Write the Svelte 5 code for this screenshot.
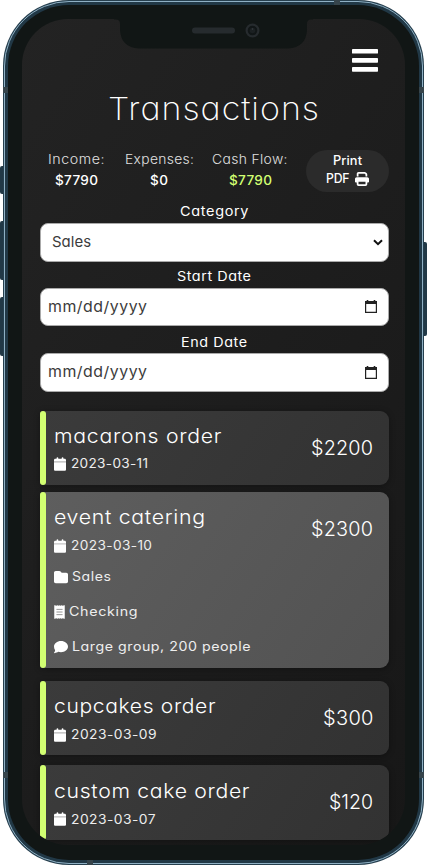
<script>
  const summary = [
    { label: 'Income:', value: '$7790', lw: 56.5, vw: 43, cell: 72 },
    { label: 'Expenses:', value: '$0', lw: 69, vw: 18, cell: 94.5 },
    { label: 'Cash Flow:', value: '$7790', lw: 75.5, vw: 43, cell: 87, positive: true }
  ];

  const transactions = [
    { title: 'macarons order', tw: 167.5, amount: '$2200', aw: 62, date: '2023-03-11', dw: 77 },
    {
      title: 'event catering', tw: 151, amount: '$2300', aw: 62, date: '2023-03-10', dw: 81,
      details: [
        { icon: 'folder', text: 'Sales', w: 39 },
        { icon: 'receipt', text: 'Checking', w: 68.5 },
        { icon: 'comment', text: 'Large group, 200 people', w: 178.5 }
      ]
    },
    { title: 'cupcakes order', tw: 161.5, amount: '$300', aw: 50.5, date: '2023-03-09', dw: 85.5 },
    { title: 'custom cake order', tw: 195.5, amount: '$120', aw: 44, date: '2023-03-07', dw: 84.5 }
  ];

  // Sets the text to the given width, shared between wider letters and tracking.
  function fit(node, width) {
    const natural = node.getBoundingClientRect().width;
    const k = Math.pow(width / natural, 0.6);
    const gap = (width / k - natural) / (node.textContent.length - 1);
    node.style.letterSpacing = `${gap}px`;
    node.style.transform = `scaleX(${k})`;
    node.style.marginRight = `${width - width / k - gap}px`;
  }
</script>

<div class="stage">
  <i class="key k1"></i><i class="key k2"></i><i class="key k3"></i><i class="key k4"></i>
  <div class="phone">
    <div class="rim">
      <div class="body">
        <div class="screen">
          <header>
            <svg class="menu" width="26" height="23" viewBox="0 0 26 23" fill="#fff">
              <rect width="26" height="4.6" rx=".7" /><rect y="9.1" width="26" height="4.6" rx=".7" /><rect y="18.1" width="26" height="4.6" rx=".7" />
            </svg>
          </header>
          <h1><span use:fit={211}>Transactions</span></h1>

          <section class="summary">
            {#each summary as s}
              <div class="stat" style="width:{s.cell}px">
                <div class="label"><span use:fit={s.lw}>{s.label}</span></div>
                <div class="value" class:positive={s.positive}><span use:fit={s.vw}>{s.value}</span></div>
              </div>
            {/each}
            <button class="print">
              <div><span use:fit={29}>Print</span></div>
              <div class="pdf">
                <span use:fit={23.5}>PDF</span>
                <svg width="14" height="14" viewBox="0 0 512 512" fill="#fff">
                  <path d="M128 0C92.700 0 64 28.700 64 64v96h64V64h226.700L384 93.300V160h64V93.300c0-17-6.700-33.300-18.700-45.300L400 18.700C388 6.700 371.700 0 354.700 0H128zM384 352v32 64H128V384 368 352H384zm64 32h32c17.700 0 32-14.300 32-32V256c0-35.300-28.700-64-64-64H64c-35.300 0-64 28.700-64 64v96c0 17.700 14.300 32 32 32H64v64c0 35.300 28.700 64 64 64H384c35.300 0 64-28.700 64-64V384z" />
                </svg>
              </div>
            </button>
          </section>

          <form>
            <label class="first"><span use:fit={68.5}>Category</span></label>
            <div class="field select">
              <span use:fit={39}>Sales</span>
              <svg width="10" height="7" viewBox="0 0 10 7" fill="none" stroke="#111" stroke-width="2"><path d="M1 1.200 5 5.200 9 1.200" /></svg>
            </div>
            <label><span use:fit={74}>Start Date</span></label>
            <div class="field date">
              <span use:fit={99}>mm/dd/yyyy</span>
              <svg width="12" height="13" viewBox="0 0 12 13"><path d="M0 1h1.700V0h1.600v1h5.400V0h1.600v1H12v12H0zM1.200 4v7.800h9.600V4z" fill="#222" fill-rule="evenodd" /></svg>
            </div>
            <label class="last"><span use:fit={66}>End Date</span></label>
            <div class="field date">
              <span use:fit={99}>mm/dd/yyyy</span>
              <svg width="12" height="13" viewBox="0 0 12 13"><path d="M0 1h1.700V0h1.600v1h5.400V0h1.600v1H12v12H0zM1.200 4v7.800h9.600V4z" fill="#222" fill-rule="evenodd" /></svg>
            </div>
          </form>

          <div class="list">
            {#each transactions as t}
              <article class:open={t.details}>
                <div class="accent"></div>
                <div class="main">
                  <h2><span use:fit={t.tw}>{t.title}</span></h2>
                  <div class="when">
                    <svg width="12" height="14" viewBox="0 0 448 512" fill="#fff"><path d="M96 32V64H48C21.500 64 0 85.500 0 112v48H448V112c0-26.500-21.500-48-48-48H352V32c0-17.700-14.300-32-32-32s-32 14.300-32 32V64H160V32c0-17.700-14.300-32-32-32S96 14.300 96 32zM448 192H0V464c0 26.500 21.500 48 48 48H400c26.500 0 48-21.500 48-48V192z" /><path d="M0 155H448V197H0Z" opacity=".65" /></svg>
                    <span use:fit={t.dw}>{t.date}</span>
                  </div>
                  {#each t.details ?? [] as d}
                    <div class="detail">
                      {#if d.icon === 'folder'}
                        <svg width="14" height="14" viewBox="0 0 512 512" fill="#fff"><path d="M64 480H448c35.300 0 64-28.700 64-64V160c0-35.300-28.700-64-64-64H288c-10.100 0-19.600-4.700-25.600-12.800L243.200 57.600C231.100 41.500 212.100 32 192 32H64C28.700 32 0 60.700 0 96V416c0 35.300 28.700 64 64 64z" /></svg>
                      {:else if d.icon === 'receipt'}
                        <svg width="11" height="14" viewBox="0 0 384 512"><path d="M0 10 26 6l44 22 48-22 44 22 30-22 34 22 46-22 42 22 44-22 26 4v492l-26 4-44-22-42 22-46-22-34 22-30-22-44 22-48-22-44 22-26-4z" fill="#fff" /><path d="M80 160H304M80 256H304M80 352H304" stroke="#777" stroke-width="28" /></svg>
                      {:else}
                        <svg width="14" height="14" viewBox="0 0 512 512" fill="#fff"><path d="M512 240c0 114.900-114.600 208-256 208-37.100 0-72.300-6.400-104.100-17.900-11.900 8.700-31.300 20.600-54.300 30.600C73.600 471.100 44.700 480 16 480c-6.500 0-12.300-3.900-14.800-9.900s-1.100-12.800 3.400-17.400l2.300-2.300c3.200-3.500 7.700-8.700 12.300-16.100 10-16.100 19.500-37.200 21.400-61C15 335 0 289 0 240 0 125.100 114.600 32 256 32s256 93.100 256 208z" /></svg>
                      {/if}
                      <span use:fit={d.w}>{d.text}</span>
                    </div>
                  {/each}
                </div>
                <div class="amount"><span use:fit={t.aw}>{t.amount}</span></div>
              </article>
            {/each}
          </div>
        </div>
      </div>
    </div>
    <i class="band b1"></i><i class="band b2"></i><i class="band b3"></i><i class="band b4"></i><i class="band b5"></i><i class="band b6"></i>
    <svg class="notch" width="199" height="32" viewBox="0 0 199 32">
      <path d="M0 0H199V2.500H197Q193 2.500 193 7V13Q192 30.500 174 31.500H25Q7 30.500 6 13V7Q6 2.500 2 2.500H0Z" fill="#111615" />
      <rect x="78" y="10.500" width="43" height="6" rx="3" fill="#262b2e" />
      <circle cx="138.500" cy="13.500" r="5.900" fill="#111617" stroke="#262b2e" stroke-width="2.200" />
      <circle cx="138.500" cy="13.500" r="2.800" fill="#1b2022" />
      <circle cx="138.500" cy="12" r=".8" fill="#3a4044" />
    </svg>
  </div>
</div>

<style>
  :global(body) { background: #fff; }
  .stage, .stage * { box-sizing: border-box; }
  .stage {
    position: relative;
    width: 427px;
    height: 865px;
    overflow: hidden;
    padding: 0 3px;
    color: #fff;
    font-family: Inter, "Noto Sans", sans-serif;
    font-feature-settings: "cv11" 1, "calt" 0;
  }
  span { display: inline-block; white-space: nowrap; transform-origin: left center; }
  .key { position: absolute; width: 8px; background: #213846; border-radius: 2px; }
  .k1 { left: 0; top: 166px; height: 28px; }
  .k2 { left: 0; top: 221px; height: 59px; }
  .k3 { left: 0; top: 297px; height: 59px; }
  .k4 { right: 0; top: 242px; height: 94px; }
  .phone {
    position: relative;
    height: 865px;
    padding: 1px;
    border-radius: 66px;
    background: #263f4e;
  }
  .rim {
    height: 863px;
    border: 1px solid #8fb0c4;
    border-radius: 65px;
    background: #213846;
    padding: 3px;
  }
  .body {
    height: 855px;
    border-radius: 61px;
    background: #111615;
    padding: 14px;
  }
  .screen {
    height: 826px;
    overflow: hidden;
    border-radius: 46px;
    padding: 0 16px 0 18px;
    background: linear-gradient(125deg, #232323, #171717);
  }
  .band { position: absolute; background: #36444b; }
  .b1 { left: 0; top: 87px; width: 5px; height: 6px; }
  .b2 { right: 0; top: 87px; width: 5px; height: 6px; }
  .b3 { left: 331px; top: 0; width: 6px; height: 5px; }
  .b4 { left: 84px; bottom: 0; width: 6px; height: 5px; }
  .b5 { left: 0; top: 772px; width: 5px; height: 6px; }
  .b6 { right: 0; top: 772px; width: 5px; height: 6px; }
  .notch { position: absolute; left: 111px; top: 17px; }

  header { height: 53px; display: flex; justify-content: flex-end; align-items: flex-end; padding-right: 11.500px; }
  .menu { display: block; }
  h1 { margin: 16px 0 0; width: 346px; height: 42px; line-height: 42px; text-align: center; font-size: 31.500px; font-weight: 200; }
  .summary { display: flex; height: 61px; padding-top: 19px; width: 349px; }
  .stat { text-align: center; font-size: 13px; line-height: 21px; flex: none; }
  .label { color: #e0e0e0; font-weight: 300; }
  .value { font-weight: 500; }
  .positive { color: #d2ff72; }
  .print {
    margin: 0.500px 0 0 auto;
    width: 83px;
    height: 42px;
    flex: none;
    border: 0;
    border-radius: 21px;
    background: #2b2b2b;
    color: #fff;
    font: 500 12.500px/18px Inter, sans-serif;
    padding: 2px 0 4px;
    text-align: center;
  }
  .pdf { display: flex; justify-content: center; align-items: center; gap: 6px; }
  form { width: 349px; }
  label { display: block; width: 348px; height: 26px; padding-top: 4.500px; line-height: 20px; text-align: center; font-size: 13px; }
  label.first { height: 32px; padding-top: 10px; }
  label.last { height: 27px; padding-top: 6px; }
  .field {
    height: 38.500px;
    border-radius: 8px;
    background: #fff;
    color: #3c3c3c;
    border: 1px solid #aaa;
    display: flex;
    align-items: center;
    justify-content: space-between;
    font-size: 14.800px;
  }
  .select { padding: 0 5px 0 11px; }
  .date { padding: 0 11px 0 7px; }
  .list { width: 349px; padding-top: 19px; }
  article {
    height: 74.500px;
    border-radius: 3px 9px 9px 3px;
    background: linear-gradient(125deg, #3b3b3b, #323232);
    box-shadow: 0 1px 6px #0005;
    display: flex;
    padding-right: 16px;
    margin-bottom: 10px;
  }
  article:first-child { margin-bottom: 6.500px; }
  .accent { flex: none; width: 5.500px; border-radius: 3px; background: #d2ff72; }
  .main { flex: 1; padding: 12px 0 0 8.500px; }
  article:not(:first-child) .main { padding-top: 12.800px; }
  .open { height: 176px; margin-bottom: 13px; background: linear-gradient(125deg, #5e5e5e, #525252); }
  h2 { margin: 0; font-size: 19.500px; font-weight: 330; line-height: 26px; }
  .when, .detail { display: flex; align-items: center; gap: 4.500px; font-size: 12.800px; color: #eee; }
  .when { height: 20px; margin-top: 5px; }
  article:not(:first-child) .when { margin-top: 5.500px; }
  .detail { height: 20px; margin-top: 15px; gap: 4px; }
  .when + .detail { margin-top: 11px; }
  .amount { font-size: 19.500px; line-height: 26px; padding-top: 24px; font-weight: 350; }
</style>
